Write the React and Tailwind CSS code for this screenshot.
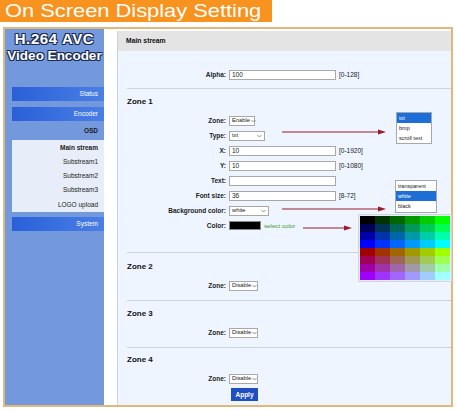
import React from 'react';

const FONT = "font-['Liberation_Sans',Arial,sans-serif]";

function Chevron() {
  return (
    <svg width="5" height="4" viewBox="0 0 5 4" className="ml-[1px] shrink-0">
      <path d="M0.5 1 L2.5 3 L4.5 1" fill="none" stroke="#666" strokeWidth="0.7" />
    </svg>
  );
}

function Select({ value, w }) {
  return (
    <div className={`h-[10px] ${w} border border-[#a8a8a8] bg-white flex items-center justify-between px-[2px] text-[5.8px] text-[#222]`}>
      <span className="leading-none">{value}</span>
      <Chevron />
    </div>
  );
}

function Input({ value = '' }) {
  return (
    <div className="h-[10px] w-[107px] border border-[#a8a8a8] bg-white text-[6.5px] leading-[8px] pl-[2px] text-[#222]">
      {value}
    </div>
  );
}

function Row({ label, children, h = 'h-[15px]' }) {
  return (
    <div className={`flex items-center ${h}`}>
      <div className="w-[110px] text-right font-bold text-[6.5px] text-[#222] pr-[2px]">{label}</div>
      <div className="ml-[1px] flex items-center">{children}</div>
    </div>
  );
}

function Hint({ children }) {
  return <span className="ml-[3px] text-[6.5px] text-[#222]">{children}</span>;
}

function Sep() {
  return <div className="ml-[9px] h-px bg-[#cbd3dd]" />;
}

function ZoneHead({ children, mt }) {
  return <div className={`pl-[9px] ${mt} h-[14px] flex items-center font-bold text-[8px] text-[#111]`}>{children}</div>;
}

const SUB = ['Main stream', 'Substream1', 'Substream2', 'Substream3', 'LOGO upload'];

const GV = [0, 51, 102, 153, 204, 255];
const BV = [0, 85, 170, 255];
const PALETTE = [0, 160].flatMap(r => BV.flatMap(b => GV.map(g => `rgb(${r},${g},${b})`)));

const NAV_BTN = 'ml-[7px] h-[14px] bg-gradient-to-r from-[#2b5fd9] to-[#4a7fe6] text-white text-[6.5px] flex items-center justify-end pr-[6px]';

export default function App() {
  return (
    <div className={`relative w-[457px] h-[411px] bg-white overflow-hidden ${FONT}`}>
      {/* title strip */}
      <div className="h-[22px] w-[272px] bg-[#f7931e] text-white text-[19px] leading-[22px] pl-[5px] whitespace-nowrap">
        <span className="inline-block origin-left scale-x-[1.15]">On Screen Display Setting</span>
      </div>

      {/* frame */}
      <div className="mt-[5px] ml-[3px] w-[450px] h-[380px] border-2 border-[#dfb87c] flex">
        {/* sidebar */}
        <div className="w-[99px] bg-[#7399dc] flex flex-col">
          <div className="pt-[1px] text-center text-white font-bold leading-[17px] whitespace-nowrap [text-shadow:1px_1px_0_#1c2b52,-1px_-1px_0_#1c2b52,1px_-1px_0_#1c2b52,-1px_1px_0_#1c2b52,0_1px_0_#1c2b52,0_-1px_0_#1c2b52]">
            <div className="text-[15px] tracking-[0.6px]">H.264 AVC</div>
            <div className="text-[13.5px]">Video Encoder</div>
          </div>
          <div className={`mt-[23px] ${NAV_BTN}`}>Status</div>
          <div className={`mt-[6px] ${NAV_BTN}`}>Encoder</div>
          <div className="ml-[7px] h-[19px] flex items-center justify-end pr-[6px] text-[6.5px] font-bold text-[#1a1a1a]">OSD</div>
          <div className="ml-[7px] h-[72px] bg-[#e8eef9] flex flex-col justify-center pr-[6px]">
            {SUB.map((s, i) => (
              <div key={s} className={`h-[14.3px] flex items-center justify-end text-[6.5px] text-[#1a1a1a] ${i === 0 ? 'font-bold' : ''}`}>{s}</div>
            ))}
          </div>
          <div className={`mt-[5px] ${NAV_BTN}`}>System</div>
        </div>

        <div className="w-[13px] bg-white" />

        {/* main panel */}
        <div className="flex-1 mt-[2px] border-l border-[#cdd3da] bg-[#eef5fe] flex flex-col">
          <div className="h-[20px] bg-[#e4e4e4] flex items-center pl-[8px] font-bold text-[6.8px] text-[#111]">Main stream</div>

          <div className="mt-[17px]">
            <Row label="Alpha:" h="h-[14px]">
              <Input value="100" />
              <Hint>[0-128]</Hint>
            </Row>
          </div>
          <div className="mt-[6px]"><Sep /></div>

          <ZoneHead mt="mt-[6px]">Zone 1</ZoneHead>
          <div className="mt-[4px]">
            <Row label="Zone:"><Select value="Enable" w="w-[26px]" /></Row>
            <Row label="Type:"><Select value="txt" w="w-[36px]" /></Row>
            <Row label="X:"><Input value="10" /><Hint>[0-1920]</Hint></Row>
            <Row label="Y:"><Input value="10" /><Hint>[0-1080]</Hint></Row>
            <Row label="Text:"><Input /></Row>
            <Row label="Font size:"><Input value="36" /><Hint>[8-72]</Hint></Row>
            <Row label="Background color:"><Select value="white" w="w-[40px]" /></Row>
            <Row label="Color:">
              <div className="w-[32px] h-[9px] bg-black border border-[#888]" />
              <span className="ml-[3px] text-[6.2px] text-[#3f9a2f]">select color</span>
            </Row>
          </div>
          <div className="mt-[19px]"><Sep /></div>

          <ZoneHead mt="mt-[7px]">Zone 2</ZoneHead>
          <div className="mt-[4px]"><Row label="Zone:"><Select value="Disable" w="w-[29px]" /></Row></div>
          <div className="mt-[7px]"><Sep /></div>

          <ZoneHead mt="mt-[6px]">Zone 3</ZoneHead>
          <div className="mt-[4px]"><Row label="Zone:"><Select value="Disable" w="w-[29px]" /></Row></div>
          <div className="mt-[7px]"><Sep /></div>

          <ZoneHead mt="mt-[5px]">Zone 4</ZoneHead>
          <div className="mt-[4px]"><Row label="Zone:"><Select value="Disable" w="w-[29px]" /></Row></div>
          <div className="mt-[2px] flex">
            <div className="w-[113px]" />
            <div className="w-[27px] h-[13px] bg-[#1f4fc2] text-white font-bold text-[6.5px] flex items-center justify-center">Apply</div>
          </div>
        </div>
      </div>

      {/* annotation arrows */}
      <svg className="absolute inset-0 pointer-events-none" width="457" height="411">
        <g stroke="#9c1a2c" strokeWidth="1.2">
          <line x1="282" y1="132" x2="380" y2="132" />
          <line x1="282" y1="209" x2="380" y2="209" />
          <line x1="303" y1="228" x2="346" y2="228" />
        </g>
        <g fill="#9c1a2c">
          <polygon points="378,129.5 386,132 378,134.5" />
          <polygon points="378,206.5 386,209 378,211.5" />
          <polygon points="344,225.5 352,228 344,230.5" />
        </g>
      </svg>

      {/* type dropdown */}
      <div className="absolute left-[396px] top-[112px] w-[36px] border border-[#a0a8b4] bg-white text-[5.5px] text-[#222]">
        <div className="h-[10px] bg-[#1d6fd6] text-white flex items-center pl-[2px]">txt</div>
        <div className="h-[10px] flex items-center pl-[2px]">bmp</div>
        <div className="h-[10px] flex items-center pl-[2px]">scroll text</div>
      </div>

      {/* background colour dropdown */}
      <div className="absolute left-[395px] top-[180px] w-[42px] border border-[#a0a8b4] bg-white text-[5.5px] text-[#222]">
        <div className="h-[10px] flex items-center pl-[2px]">transparent</div>
        <div className="h-[10px] bg-[#1d6fd6] text-white flex items-center pl-[2px]">white</div>
        <div className="h-[11px] flex items-center pl-[2px]">black</div>
      </div>

      {/* colour picker */}
      <div className="absolute left-[358px] top-[214px] p-px bg-[#e6ecf2] border border-[#d0d6de]">
        <div className="grid grid-cols-6">
          {PALETTE.map((c, i) => (
            <div key={i} className="w-[15px] h-[8px]" style={{ background: c }} />
          ))}
        </div>
      </div>
    </div>
  );
}
